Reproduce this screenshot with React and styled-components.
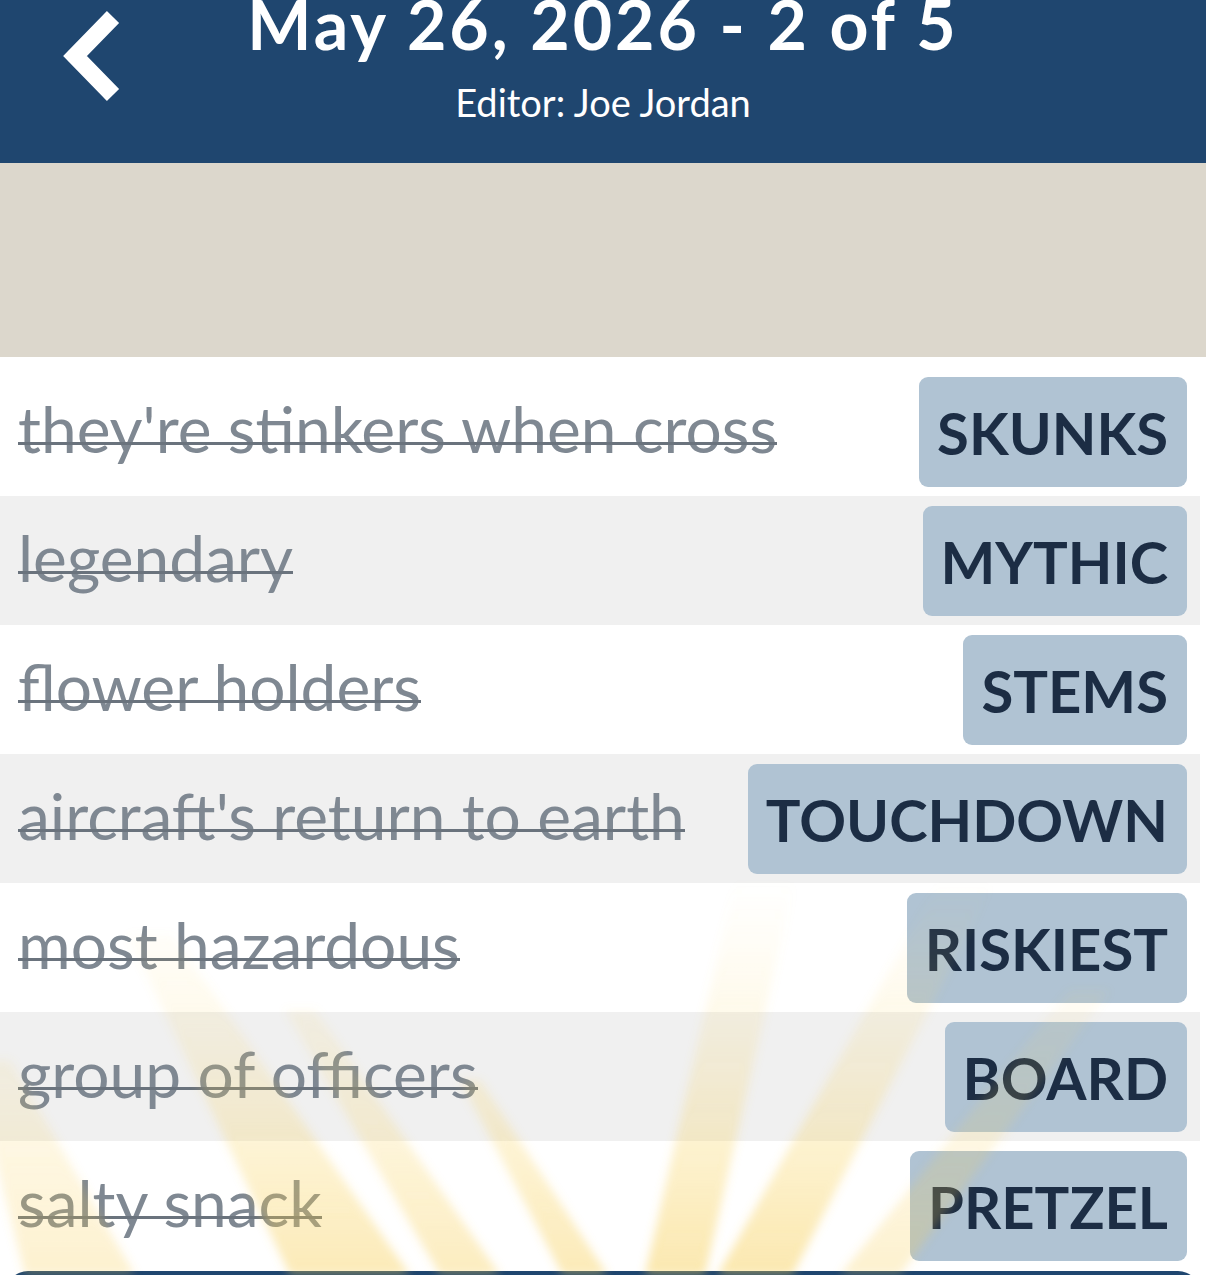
import styled, { createGlobalStyle } from "styled-components";

const GlobalStyle = createGlobalStyle`
    body {
        margin: 0;
        background: #ffffff;
        font-family: "Lato", "Open Sans", sans-serif;
    }
`;

const puzzle = {
    date: "May 26, 2026",
    index: 2,
    total: 5,
    editor: "Joe Jordan",
};

const clues = [
    { clue: "they're stinkers when cross", answer: "SKUNKS" },
    { clue: "legendary", answer: "MYTHIC" },
    { clue: "flower holders", answer: "STEMS" },
    { clue: "aircraft's return to earth", answer: "TOUCHDOWN" },
    { clue: "most hazardous", answer: "RISKIEST" },
    { clue: "group of officers", answer: "BOARD" },
    { clue: "salty snack", answer: "PRETZEL" },
];

// light beams of the solved-puzzle glow: top/bottom centre and width, in page px
const beams = [
    { top: [-10, 1060, 40], bottom: [80, 1275, 110], strength: 0.6 },
    { top: [150, 935, 45], bottom: [350, 1275, 120], strength: 0.9 },
    { top: [300, 1010, 30], bottom: [470, 1275, 60], strength: 0.8 },
    { top: [470, 1080, 20], bottom: [585, 1275, 45], strength: 0.9 },
    { top: [765, 880, 60], bottom: [675, 1275, 60], strength: 1 },
    { top: [965, 885, 55], bottom: [755, 1275, 75], strength: 1 },
    { top: [1090, 990, 40], bottom: [870, 1275, 60], strength: 0.6 },
];

const beamPoints = ({ top, bottom }) => {
    const [tx, ty, tw] = top;
    const [bx, by, bw] = bottom;
    return `${tx - tw / 2},${ty} ${tx + tw / 2},${ty} ${bx + bw / 2},${by} ${bx - bw / 2},${by}`;
};

const BackArrow = () => (
    <BackIcon width="70" height="100" viewBox="0 0 70 100">
        <polyline
            points="52,16 14,55 52,94"
            fill="none"
            stroke="#ffffff"
            strokeWidth="17"
            strokeLinejoin="miter"
        />
    </BackIcon>
);

const Sunburst = () => (
    <RaysLayer viewBox="0 860 1206 415">
        <defs>
            <linearGradient id="beamFade" gradientUnits="userSpaceOnUse" x1="0" y1="1275" x2="0" y2="880">
                <stop offset="0" stopColor="#f7cd4e" stopOpacity="0.45" />
                <stop offset="0.55" stopColor="#f8d35f" stopOpacity="0.18" />
                <stop offset="1" stopColor="#fadb7a" stopOpacity="0" />
            </linearGradient>
            <filter id="beamSoft" x="-10%" y="-10%" width="120%" height="120%">
                <feGaussianBlur stdDeviation="5" />
            </filter>
        </defs>
        <g filter="url(#beamSoft)">
            {beams.map((b, i) => (
                <polygon key={i} points={beamPoints(b)} fill="url(#beamFade)" opacity={b.strength} />
            ))}
        </g>
    </RaysLayer>
);

const ClueRow = ({ clue, answer, shaded }) => (
    <Row $shaded={shaded}>
        <Clue>{clue}</Clue>
        <Answer>{answer}</Answer>
    </Row>
);

export default function App() {
    return (
        <>
            <GlobalStyle />
            <Screen>
                <Header>
                    <BackButton aria-label="back">
                        <BackArrow />
                    </BackButton>
                    <TitleBlock>
                        <Title>
                            {puzzle.date} - {puzzle.index} of {puzzle.total}
                        </Title>
                        <Subtitle>Editor: {puzzle.editor}</Subtitle>
                    </TitleBlock>
                </Header>
                <Banner />
                <ClueList>
                    {clues.map((c, i) => (
                        <ClueRow key={c.answer} clue={c.clue} answer={c.answer} shaded={i % 2 === 1} />
                    ))}
                </ClueList>
                <NextButton />
                <Sunburst />
            </Screen>
        </>
    );
}

const Screen = styled.div`
    position: relative;
    width: 1206px;
    height: 1275px;
    overflow: hidden;
    background: #ffffff;
`;

const Header = styled.header`
    height: 163px;
    background: #1f466f;
    display: grid;
    grid-template-columns: 140px 1fr 140px;
    grid-template-rows: 163px;
    overflow: hidden;
`;

const BackButton = styled.div`
    padding-left: 61px;
    display: flex;
    align-items: flex-start;
`;

const BackIcon = styled.svg`
    display: block;
    flex-shrink: 0;
    margin-top: 1px;
`;

const TitleBlock = styled.div`
    display: flex;
    flex-direction: column;
    align-items: center;
    color: #ffffff;
`;

const Title = styled.h1`
    margin: -6px 0 25px;
    font-size: 68px;
    line-height: 60px;
    font-weight: 700;
    letter-spacing: 3px;
    white-space: nowrap;
`;

const Subtitle = styled.div`
    font-size: 38px;
    line-height: 46px;
    font-weight: 400;
`;

const Banner = styled.div`
    height: 194px;
    background: #dcd7cc;
`;

const ClueList = styled.div`
    width: 1200px;
    padding-top: 10px;
`;

const Row = styled.div`
    box-sizing: border-box;
    height: 129px;
    padding: 10px 13px 9px 18px;
    display: flex;
    align-items: center;
    justify-content: space-between;
    background: ${(p) => (p.$shaded ? "#f0f0f0" : "#ffffff")};
`;

const Clue = styled.span`
    position: relative;
    margin-bottom: 8px;
    font-size: 64px;
    color: #7f8892;
    white-space: nowrap;

    &::after {
        content: "";
        position: absolute;
        left: 0;
        right: 0;
        bottom: 22px;
        height: 3px;
        background: #6a737d;
    }
`;

const Answer = styled.div`
    box-sizing: border-box;
    height: 110px;
    padding: 0 19px 0 18px;
    display: flex;
    align-items: center;
    border-radius: 9px;
    background: #b0c3d3;
    color: #1c2d44;
    font-size: 58px;
    font-weight: 700;
`;

const NextButton = styled.div`
    height: 90px;
    margin: 1px 6px 0;
    border-radius: 22px;
    background: #1f466f;
`;

const RaysLayer = styled.svg`
    position: absolute;
    left: 0;
    top: 860px;
    width: 1206px;
    height: 415px;
    pointer-events: none;
`;
